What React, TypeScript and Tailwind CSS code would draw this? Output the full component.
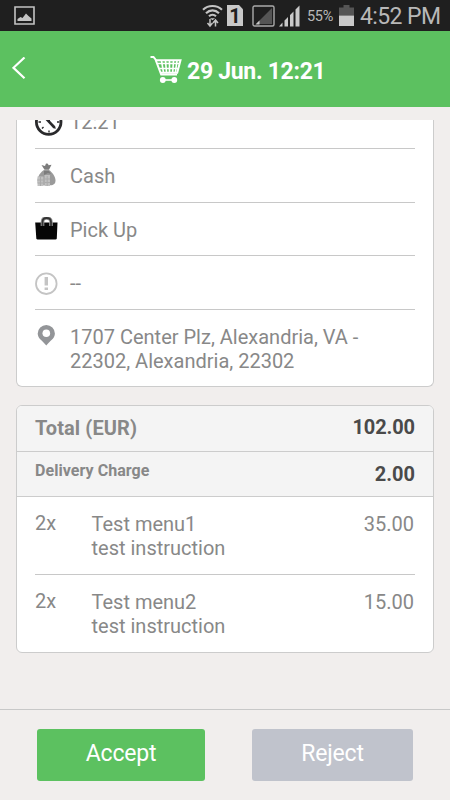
import type { ReactNode } from "react";

interface InfoRow {
  id: string;
  icon: ReactNode;
  label: string;
}

interface OrderItem {
  quantity: string;
  name: string;
  note: string;
  price: string;
}

function ClockIcon() {
  return (
    <svg width="28" height="28" viewBox="0 0 28 28" fill="none" stroke="#2a2a2c">
      <circle cx="13.700" cy="14" r="12.300" strokeWidth="2.800" />
      <path d="M14 22.500v2M3.500 14h2.500M22 14h2.500M7 20.500l1.500-1.500M20.500 20.500L19 19" strokeWidth="1.400" />
      <path d="M11.500 11l8 8.500" strokeWidth="2.600" />
      <path d="M14 14V6" strokeWidth="2" />
    </svg>
  );
}

function MoneyBagIcon() {
  return (
    <svg width="22" height="24" viewBox="0 0 22 24">
      <path d="M6.500 2l3.500 1 1-2.500 2 .3.500 1.500 3-.5-2.500 5h-4.500z" fill="#7c7c7c" />
      <path
        d="M9 7h5c3 2 6.500 6.500 6.500 10.500 0 3.500-2 4.500-5 4.800H6c-2.500-.3-3.500-2-3.500-4.800C2.500 13 6 9 9 7z"
        fill="#9a9a9a"
      />
      <path d="M9 8h5l2 3-3-1-4 2z" fill="#7c7c7c" />
      <path d="M2.500 13.500h6V23h-6zM9.500 12h5.500v11H9.500z" fill="#c0c0c0" />
      <path d="M5.500 14v9M12.200 13v10M2.500 17h6M2.500 20h6M9.500 16h5.500M9.500 19.500h5.500" stroke="#aaa" />
    </svg>
  );
}

function BagIcon() {
  return (
    <svg width="24" height="24" viewBox="0 0 24 24">
      <path
        d="M.200 5.500h22.300l-.7 15.700c0 .8-.5 1.200-1.200 1.200H2.500c-.7 0-1.200-.4-1.200-1.200z"
        fill="#060606"
      />
      <path d="M7.500 9V5C7.500 2 9 1 11.500 1s4.500 1 4.500 4v4" fill="none" stroke="#999" strokeWidth="3.600" />
      <path d="M7.500 9V5C7.500 2 9 1 11.500 1s4.500 1 4.500 4v4" fill="none" stroke="#333" strokeWidth="1.800" />
    </svg>
  );
}

function AlertIcon() {
  return (
    <svg width="24" height="24" viewBox="0 0 24 24" fill="none" stroke="#c4c4c4">
      <circle cx="11.300" cy="12.700" r="10.300" strokeWidth="1.800" />
      <path d="M11.300 6v8.500M11.300 16.500V19" strokeWidth="3.400" />
    </svg>
  );
}

function PinIcon() {
  return (
    <svg width="24" height="24" viewBox="0 0 24 24">
      <path
        d="M11.300 0a8.600 8.600 0 0 1 8.600 8.600c0 5.200-5.300 7.500-8.600 12C8 16.100 2.700 13.800 2.700 8.600A8.600 8.600 0 0 1 11.300 0z"
        fill="#939598"
      />
      <circle cx="11.300" cy="8.200" r="3.800" fill="#fff" />
    </svg>
  );
}

function CartIcon() {
  return (
    <svg width="32" height="28" viewBox="0 0 32 28" fill="none" stroke="#fff">
      <path d="M.500 2h3L5.500 4.500l5.700 15H27" strokeWidth="2" />
      <path d="M5.500 5.300h25l-3.300 12.500H11" strokeWidth="2" />
      <path d="M8 8.500h21M9 13.500h19" strokeWidth="1.300" />
      <path d="M11.500 5.500l2 12M15.500 5.500l1 12M19.500 5.500v12M23.500 5.500l-.8 12M27 5.500l-1.600 12" strokeWidth="1.600" />
      <path d="M12.500 25h12" strokeWidth="1.600" />
      <circle cx="12.800" cy="25" r="2.900" fill="#fff" stroke="none" />
      <circle cx="24.300" cy="25" r="2.900" fill="#fff" stroke="none" />
    </svg>
  );
}

function StatusBar() {
  return (
    <div className="flex h-[31px] items-center bg-[#1f1f1f] text-[#b8b8b8]">
      <svg className="ml-3.5" width="21" height="19" viewBox="0 0 21 19">
        <path d="M1 1h19v17H1z" fill="none" stroke="#c4c4c4" strokeWidth="1.600" />
        <path d="M3.500 15v-2l3-2 2 1 3.500-4.500 2.500 2.500 3 2.500V15z" fill="#c4c4c4" />
      </svg>
      <svg className="ml-[167px]" width="21" height="24" viewBox="0 0 21 24" fill="none" stroke="#c4c4c4">
        <path d="M1 5.800c5.200-5 13.800-5 19 0M4 9.200c3.800-3.800 9.200-3.800 13 0M7 12.300c2-2 5-2 7 0" strokeWidth="2.100" />
        <path d="M8 14.200h5l-2.500 2z" fill="#c4c4c4" stroke="none" />
        <path d="M8 15v7M5.500 19L8 22l2.500-3M13.500 22.500V16M11 19l2.500-3 2.500 3" strokeWidth="1.500" />
      </svg>
      <div className="ml-[4px] flex h-[21px] w-[16px] items-center justify-center bg-[#c9c9c9] pt-px text-[20px] font-bold text-[#1f1f1f] [clip-path:polygon(0_0,75%_0,100%_20%,100%_100%,0_100%)]">
        1
      </div>
      <svg className="ml-[9px]" width="23" height="22" viewBox="0 0 23 22">
        <rect x="1" y="1" width="21" height="20" rx="1.500" fill="none" stroke="#aaa" strokeWidth="1.400" />
        <path d="M4 19L20 3v16z" fill="#555" />
        <path d="M3.500 19.500l4-4v4z" fill="#c9c9c9" />
      </svg>
      <svg className="ml-1" width="21" height="22" viewBox="0 0 21 22" fill="#c9c9c9">
        <path d="M0 21.500l3.500-4v4zM5.500 15.500l3.500-3.500v9.500h-3.500zM11 10l3.500-3.500v15h-3.500zM16.500 4.500l4-4v21h-4z" />
      </svg>
      <span className="ml-[7px] w-[28px] whitespace-nowrap pt-[3px] text-[14.500px] tracking-[-0.300px]">55%</span>
      <svg className="ml-1" width="15" height="21" viewBox="0 0 15 21">
        <path d="M4.500 0h6v2.500H15v8H0v-8h4.500z" fill="#555" />
        <path d="M0 10.500h15V21H0z" fill="#c9c9c9" />
      </svg>
      <span className="ml-[6px] whitespace-nowrap pt-[2px] text-[23px] tracking-[-0.600px]">4:52 PM</span>
    </div>
  );
}

const infoRows: InfoRow[] = [
  { id: "payment", icon: <MoneyBagIcon />, label: "Cash" },
  { id: "type", icon: <BagIcon />, label: "Pick Up" },
  { id: "comment", icon: <AlertIcon />, label: "--" },
];

const items: OrderItem[] = [
  { quantity: "2x", name: "Test menu1", note: "test instruction", price: "35.00" },
  { quantity: "2x", name: "Test menu2", note: "test instruction", price: "15.00" },
];

export default function App() {
  return (
    <div className="flex h-[800px] w-[450px] flex-col overflow-hidden bg-[#f1eeed] font-['Roboto',sans-serif] text-[20px] leading-6 text-[#888]">
      <StatusBar />
      <header className="flex h-[76px] items-center bg-[#5cc160] text-white">
        <svg className="ml-3" width="14" height="24" viewBox="0 0 14 24" fill="none" stroke="#fff" strokeWidth="2.200">
          <path d="M12.500.500L1.500 10.800l11 10.500" />
        </svg>
        <div className="ml-[124px] flex items-center gap-[5px]">
          <CartIcon />
          <h1 className="whitespace-nowrap pt-[5px] text-[23px] font-bold tracking-[-0.300px]">29 Jun. 12:21</h1>
        </div>
      </header>

      <main className="flex-1 px-4 pt-[13px]">
        <section className="h-[267px] overflow-hidden rounded-b-md border border-t-0 border-[#ccc] bg-white px-[18px]">
          {/* first row is scrolled partly under the header */}
          <div className="flex h-[29px] items-end border-b border-[#c8c8c8] pb-[12px]">
            <div className="w-[35px] shrink-0">
              <ClockIcon />
            </div>
            <span className="mb-[2px]">12:21</span>
          </div>
          {infoRows.map((row) => (
            <div key={row.id} className="flex h-[53.700px] items-center border-b border-[#c8c8c8]">
              <div className="w-[35px] shrink-0">{row.icon}</div>
              <span className="pt-px">{row.label}</span>
            </div>
          ))}
          <div className="flex pt-[15px]">
            <div className="w-[35px] shrink-0">
              <PinIcon />
            </div>
            <p className="w-[310px]">
              1707 Center Plz, Alexandria, VA - 22302, Alexandria, 22302
            </p>
          </div>
        </section>

        <section className="mt-[18px] h-[248px] overflow-hidden rounded-md border border-[#ccc] bg-white">
          <div className="flex h-[46px] items-center justify-between border-b border-[#ccc] bg-[#f4f4f4] px-[18px] pb-[2px] font-bold">
            <span className="tracking-[0.100px]">Total (EUR)</span>
            <span className="pb-px text-[#4a4a4a] tracking-[-0.100px]">102.00</span>
          </div>
          <div className="flex h-[45px] items-center justify-between border-b border-[#ccc] bg-[#f4f4f4] px-[18px] font-bold">
            <span className="pb-[6px] text-[16px] tracking-[0.050px]">Delivery Charge</span>
            <span className="pb-px text-[#4a4a4a]">2.00</span>
          </div>
          <div className="mx-[18px] divide-y divide-[#c8c8c8]">
            {items.map((item) => (
              <div key={item.name} className="flex h-[78px] pt-[15px]">
                <span className="-mt-px w-[56px]">{item.quantity}</span>
                <div className="flex-1 pl-[0.500px]">
                  <p>{item.name}</p>
                  <p>{item.note}</p>
                </div>
                <span className="pr-px">{item.price}</span>
              </div>
            ))}
          </div>
        </section>
      </main>

      <footer className="flex h-[91px] border-t border-[#c8c8c8] pl-[37px] pt-[19px] text-[23px] text-white">
        <button type="button" className="h-[52px] w-[168px] rounded-[3px] bg-[#5cc160] pb-[2px] tracking-[-0.200px]">
          Accept
        </button>
        <button type="button" className="ml-[47px] h-[52px] w-[161px] rounded-[3px] bg-[#c0c3cc] pb-[2px] tracking-[-0.200px]">
          Reject
        </button>
      </footer>
    </div>
  );
}
